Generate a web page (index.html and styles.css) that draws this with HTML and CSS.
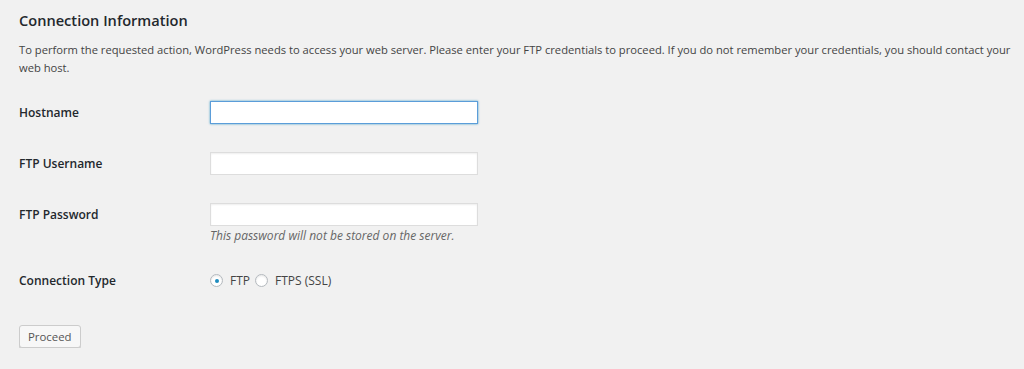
FILE: index.html
```html
<!DOCTYPE html>
<html lang="en">
    <head>
        <meta charset="UTF-8">
        <title>Connection Information</title>
        <link rel="stylesheet" href="styles.css">
    </head>
    <body>
        <div class="wrap">
            <h2>Connection Information</h2>
            <p class="intro">To perform the requested action, WordPress needs to access your web server. Please enter your FTP credentials to proceed. If you do not remember your credentials, you should contact your web host.</p>

            <table class="form-table">
                <tr>
                    <th><label for="hostname">Hostname</label></th>
                    <td><input type="text" id="hostname" class="focused"></td>
                </tr>
                <tr>
                    <th><label for="username">FTP Username</label></th>
                    <td><input type="text" id="username"></td>
                </tr>
                <tr>
                    <th><label for="password">FTP Password</label></th>
                    <td>
                        <input type="password" id="password">
                        <div class="description">This password will not be stored on the server.</div>
                    </td>
                </tr>
                <tr class="type-row">
                    <th>Connection Type</th>
                    <td>
                        <div class="radios">
                            <label><span class="radio checked"></span>FTP</label>
                            <label><span class="radio"></span>FTPS (SSL)</label>
                        </div>
                    </td>
                </tr>
            </table>

            <button class="button">Proceed</button>
        </div>
    </body>
</html>
```

FILE: styles.css
```css
html,
body {
    margin: 0;
    background: #f1f1f1;
}
body {
    font-family: 'Open Sans', sans-serif;
    font-size: 12px;
    color: #444;
}
.wrap {
    padding: 9px 6px 0 19px;
}
h2 {
    margin: 0;
    font-size: 14.6px;
    font-weight: 600;
    line-height: 22px;
    color: #23282d;
}
.intro {
    margin: 10px 0 0;
    font-size: 11.2px;
    line-height: 18px;
}
.form-table {
    border-collapse: collapse;
    margin-top: 10px;
}
.form-table th {
    width: 191px;
    padding: 0;
    text-align: left;
    vertical-align: top;
    font-weight: 600;
    font-size: 12px;
    color: #23282d;
    line-height: 23px;
}
.form-table td {
    padding: 0;
    vertical-align: top;
}
.form-table tr th,
.form-table tr td {
    padding-top: 14px;
    padding-bottom: 14px;
}
.form-table .type-row th,
.form-table .type-row td {
    padding-top: 11px;
}
input[type="text"],
input[type="password"] {
    display: block;
    width: 268px;
    height: 23px;
    box-sizing: border-box;
    margin: 0;
    border: 1px solid #ddd;
    background: #fff;
    box-shadow: inset 0 1px 2px rgba(0,0,0,0.07);
    outline: none;
}
input.focused {
    border-color: #5b9dd9;
    box-shadow: 0 0 2px rgba(30,140,190,0.8);
}
.description {
    font-style: italic;
    color: #666;
    line-height: 17px;
    margin-top: 1px;
}
.radios {
    display: flex;
    align-items: center;
    height: 23px;
}
.radios label {
    display: flex;
    align-items: center;
    margin-right: 5px;
}
.radio {
    width: 13px;
    height: 13px;
    box-sizing: border-box;
    border: 1px solid #b4b9be;
    border-radius: 50%;
    background: #fff;
    box-shadow: inset 0 1px 2px rgba(0,0,0,0.1);
    margin-right: 7px;
    display: flex;
    align-items: center;
    justify-content: center;
}
.radio.checked::before {
    content: "";
    width: 4px;
    height: 4px;
    border-radius: 50%;
    background: #1e8cbe;
}
.button {
    margin-top: 19px;
    font-family: 'Open Sans', sans-serif;
    font-size: 11.4px;
    color: #555;
    background: #f7f7f7;
    border: 1px solid #ccc;
    border-radius: 3px;
    box-shadow: 0 1px 0 #ccc;
    height: 23px;
    padding: 0 8px;
    line-height: 21px;
    cursor: pointer;
}
```
